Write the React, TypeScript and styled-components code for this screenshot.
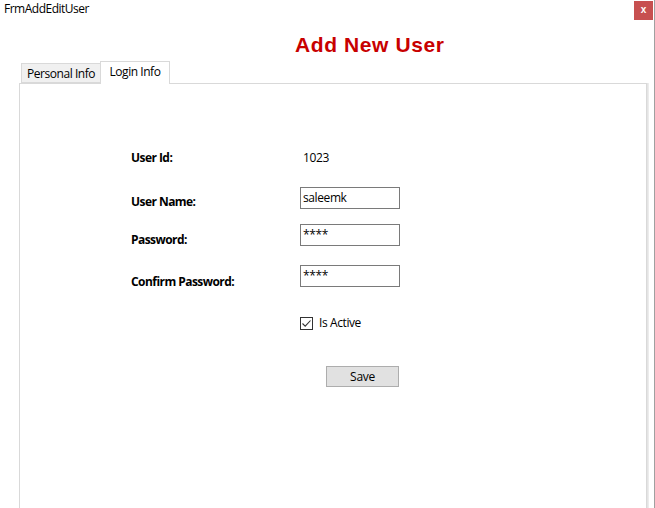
import React from "react";
import styled, { createGlobalStyle } from "styled-components";

const Global = createGlobalStyle`
  html, body { margin: 0; padding: 0; background: #fff; overflow: hidden; }
  * { box-sizing: border-box; }
`;

const uiFont = `"Segoe UI", "Open Sans", "Noto Sans", sans-serif`;

const Window = styled.div`
  width: 655px;
  height: 508px;
  background: #fff;
  border-right: 1px solid #a0a0a0;
  display: flex;
  flex-direction: column;
  overflow: hidden;
  font-family: ${uiFont};
  font-size: 12px;
  color: #000;
`;

const TitleBar = styled.div`
  height: 22px;
  display: flex;
  justify-content: space-between;
  align-items: flex-start;
  padding-left: 4px;
  flex-shrink: 0;
`;

const Caption = styled.div`
  line-height: 16px;
  margin-top: 1px;
  letter-spacing: -0.5px;
`;

const CloseButton = styled.div`
  width: 19px;
  height: 19px;
  margin-top: 1px;
  margin-right: 1px;
  background: #c75050;
  color: #fff;
  font-family: "Liberation Sans", Arial, sans-serif;
  font-weight: bold;
  font-size: 10px;
  line-height: 17px;
  text-align: center;
`;

const Heading = styled.h1`
  margin: 11px 0 0 0;
  padding-left: 295px;
  height: 24px;
  font-family: "Liberation Sans", Arial, sans-serif;
  font-size: 21px;
  line-height: 24px;
  font-weight: bold;
  letter-spacing: 0.6px;
  color: #c80000;
  flex-shrink: 0;
`;

const TabStrip = styled.div`
  margin-top: 4px;
  padding-left: 21px;
  height: 22px;
  display: flex;
  align-items: flex-end;
  position: relative;
  z-index: 1;
  flex-shrink: 0;
`;

const Tab = styled.div<{ $active?: boolean }>`
  height: ${(p) => (p.$active ? "23px" : "20px")};
  width: ${(p) => (p.$active ? "70px" : "80px")};
  margin-left: ${(p) => (p.$active ? "-1px" : "0")};
  margin-bottom: ${(p) => (p.$active ? "-1px" : "0")};
  background: ${(p) => (p.$active ? "#fff" : "#f0f0f0")};
  border: 1px solid #d9d9d9;
  border-bottom: ${(p) => (p.$active ? "none" : "1px solid #d9d9d9")};
  display: flex;
  justify-content: center;
  align-items: flex-start;
  padding-top: 2px;
  line-height: 16px;
  letter-spacing: -0.45px;
  white-space: nowrap;
`;

const Panel = styled.div`
  margin-left: 19px;
  width: 628px;
  height: 460px;
  flex-shrink: 0;
  background: #fff;
  border: 1px solid #d9d9d9;
  box-shadow: 1px 0 0 #e4e4e4, 2px 0 0 #ececec;
  padding: 66px 0 0 111px;
`;

const Form = styled.div`
  display: flex;
  flex-direction: column;
`;

const Row = styled.div<{ $gap: number; $height: number }>`
  display: grid;
  grid-template-columns: 169px 1fr;
  align-items: start;
  margin-top: ${(p) => p.$gap}px;
  height: ${(p) => p.$height}px;
`;

const Label = styled.div<{ $offset?: number }>`
  font-weight: bold;
  line-height: 16px;
  margin-top: ${(p) => p.$offset ?? 0}px;
  letter-spacing: -0.55px;
  white-space: nowrap;
`;

const Value = styled.div`
  line-height: 16px;
  padding-left: 3px;
  letter-spacing: -0.4px;
`;

const TextBox = styled.input`
  width: 100px;
  height: 22px;
  border: 1px solid #7a7a7a;
  padding: 1px 2px 2px 2px;
  margin: 0;
  font-family: ${uiFont};
  font-size: 12px;
  line-height: 16px;
  color: #000;
  background: #fff;
  outline: none;
  letter-spacing: -0.4px;
`;

const CheckLine = styled.label`
  display: flex;
  align-items: flex-start;
  gap: 6px;
  line-height: 16px;
  letter-spacing: -0.4px;
`;

const CheckBox = styled.span`
  width: 13px;
  height: 13px;
  margin-top: 2px;
  border: 1px solid #333;
  background: #fff;
  display: flex;
  align-items: center;
  justify-content: center;
`;

const Button = styled.button`
  margin: 0 0 0 26px;
  width: 73px;
  height: 21px;
  padding: 0;
  background: #e1e1e1;
  border: 1px solid #adadad;
  font-family: ${uiFont};
  font-size: 12px;
  line-height: 16px;
  color: #000;
  letter-spacing: -0.3px;
`;

const Empty = styled.div``;

export default function App() {
  return (
    <>
      <Global />
      <Window>
        <TitleBar>
          <Caption>FrmAddEditUser</Caption>
          <CloseButton>x</CloseButton>
        </TitleBar>
        <Heading>Add New User</Heading>
        <TabStrip>
          <Tab>Personal Info</Tab>
          <Tab $active>Login Info</Tab>
        </TabStrip>
        <Panel>
          <Form>
            <Row $gap={0} $height={16}>
              <Label>User Id:</Label>
              <Value>1023</Value>
            </Row>
            <Row $gap={21} $height={22}>
              <Label $offset={7}>User Name:</Label>
              <TextBox readOnly value="saleemk" />
            </Row>
            <Row $gap={15} $height={22}>
              <Label $offset={8}>Password:</Label>
              <TextBox readOnly value="****" />
            </Row>
            <Row $gap={19} $height={22}>
              <Label $offset={9}>Confirm Password:</Label>
              <TextBox readOnly value="****" />
            </Row>
            <Row $gap={28} $height={16}>
              <Empty />
              <CheckLine>
                <CheckBox>
                  <svg width="11" height="11" viewBox="0 0 11 11">
                    <path d="M1.5 5.5 L4.2 8.2 L9.5 2.5" fill="none" stroke="#333" strokeWidth="1.1" />
                  </svg>
                </CheckBox>
                Is Active
              </CheckLine>
            </Row>
            <Row $gap={35} $height={21}>
              <Empty />
              <div>
                <Button type="button">Save</Button>
              </div>
            </Row>
          </Form>
        </Panel>
      </Window>
    </>
  );
}
